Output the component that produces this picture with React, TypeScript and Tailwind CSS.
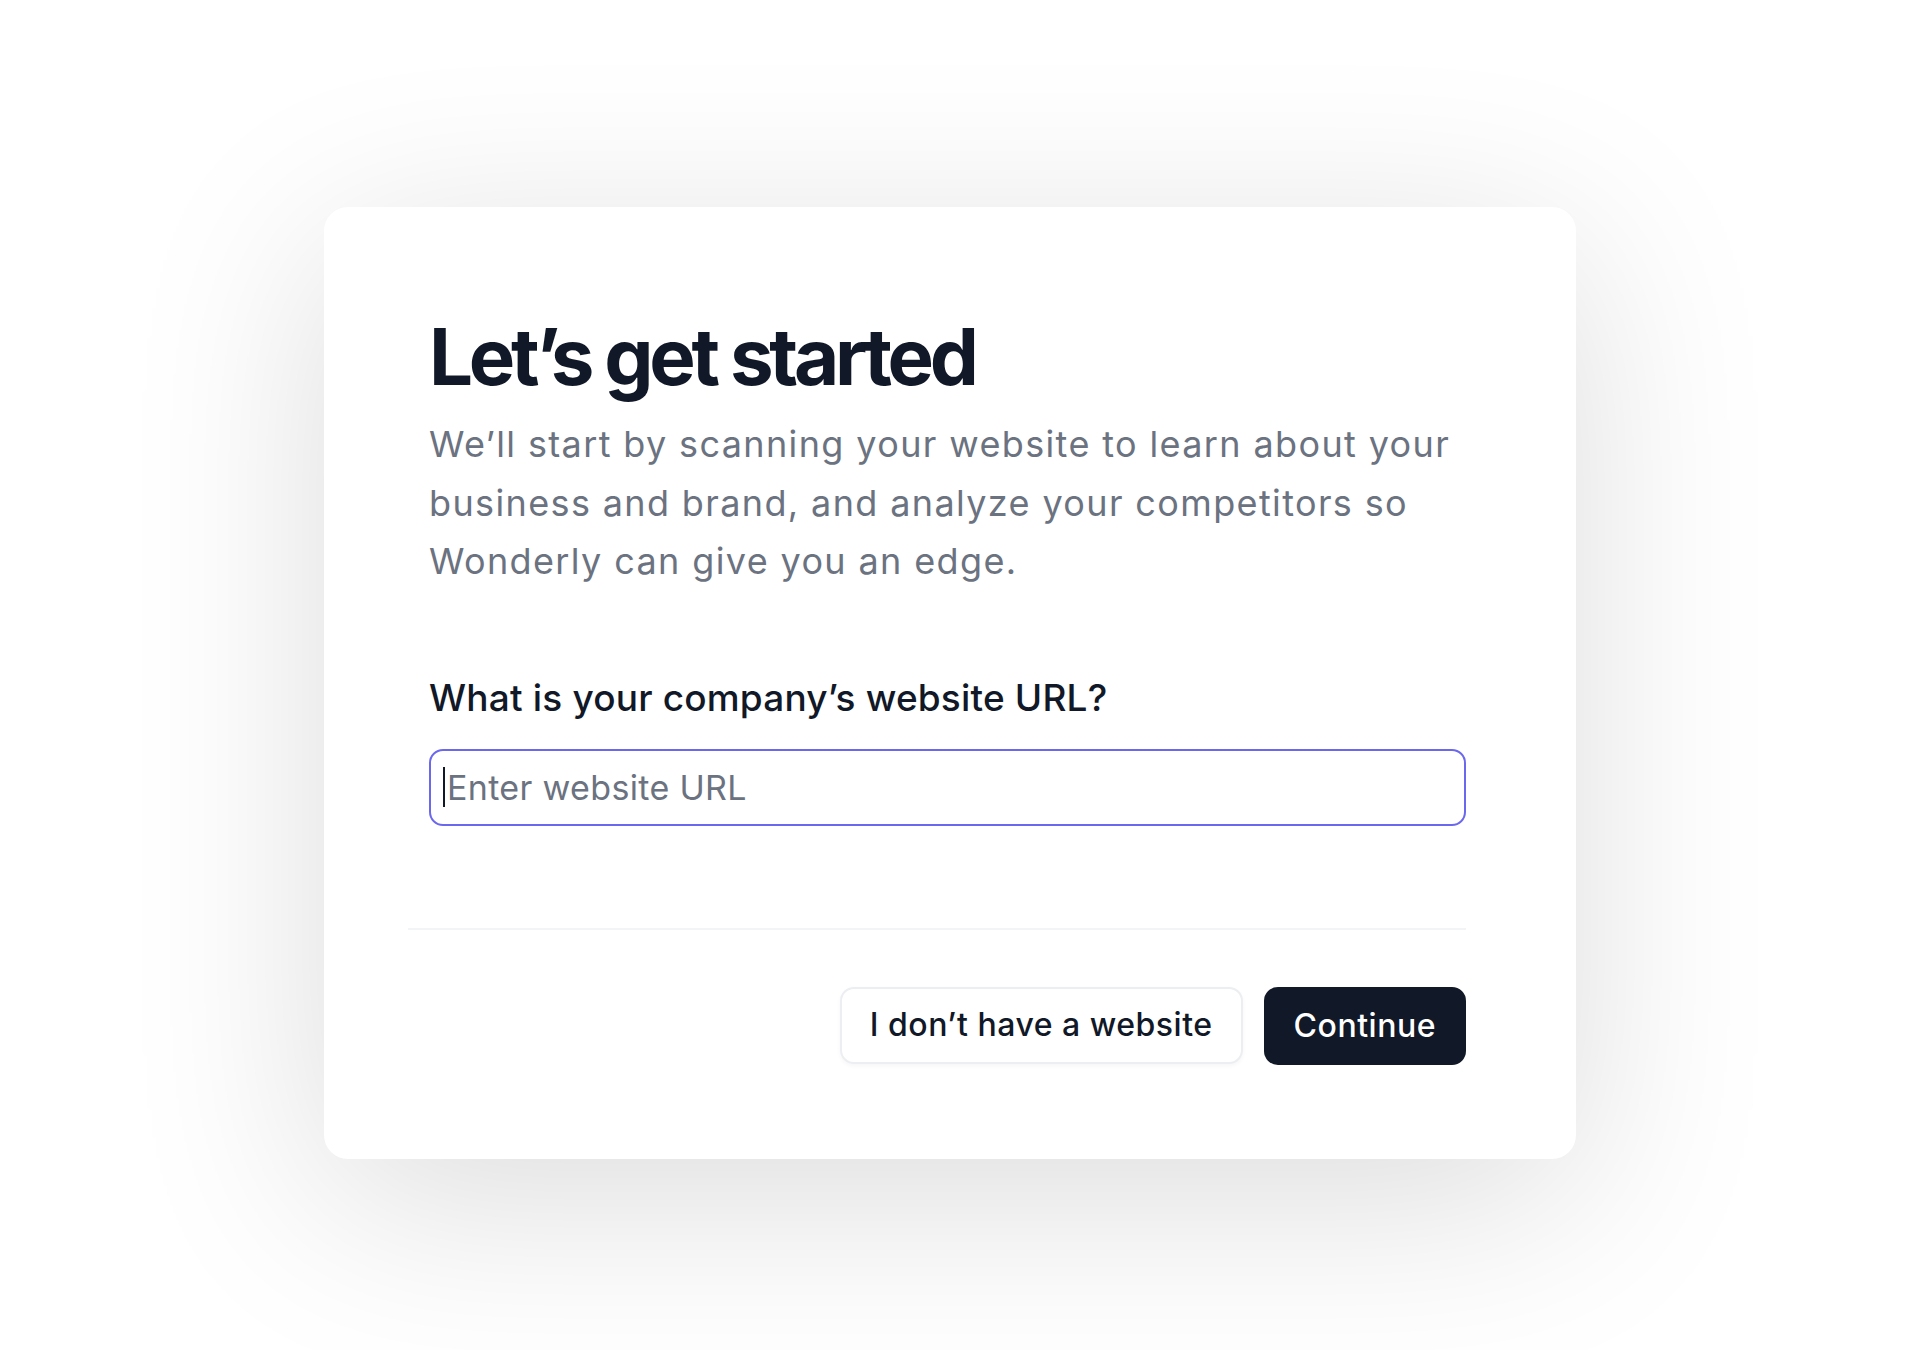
export default function App() {
  return (
    <div className="min-h-[1350px] w-full bg-white font-['Inter',sans-serif]">
      <div className="pl-[324px] pt-[207px]">
        <div className="w-[1252px] h-[952px] rounded-[24px] bg-white shadow-[0_40px_200px_rgba(0,0,0,0.14)] pl-[105px] pr-[110px] pt-[111px]">
          <h1 className="text-[78px] leading-none font-bold tracking-[-0.055em] text-[#111827]">
            Let’s get started
          </h1>
          <p className="mt-[19px] text-[36px] leading-[58.5px] tracking-[0.038em] text-[#6b7280]">
            We’ll start by scanning your website to learn about your business and brand, and analyze your competitors so Wonderly can give you an edge.
          </p>

          <label className="block mt-[80px] text-[37px] leading-[54px] font-medium tracking-[0.005em] text-[#111827]">
            What is your company’s website URL?
          </label>
          <div className="mt-[24px] h-[77px] rounded-[14px] border-2 border-[#6c68ee] flex items-center pl-[12px]">
            <span className="w-[2px] h-[40px] bg-[#111827]" />
            <span className="ml-[2px] text-[34px] tracking-[0.01em] text-[#6b7280]">Enter website URL</span>
          </div>

          {/* divider */}
          <div className="mt-[102px] ml-[-21px] h-[2px] bg-[#f3f4f6]" />

          <div className="mt-[57px] flex justify-end gap-[21px]">
            <button className="h-[77px] px-[28px] rounded-[14px] border-2 border-[#eceef2] bg-white shadow-[0_2px_4px_rgba(0,0,0,0.04)] text-[32px] font-medium tracking-[0.016em] text-[#111827]">
              I don’t have a website
            </button>
            <button className="h-[78px] px-[30px] rounded-[14px] bg-[#111827] text-[32px] font-medium tracking-[0.016em] text-white">
              Continue
            </button>
          </div>
        </div>
      </div>
    </div>
  )
}
